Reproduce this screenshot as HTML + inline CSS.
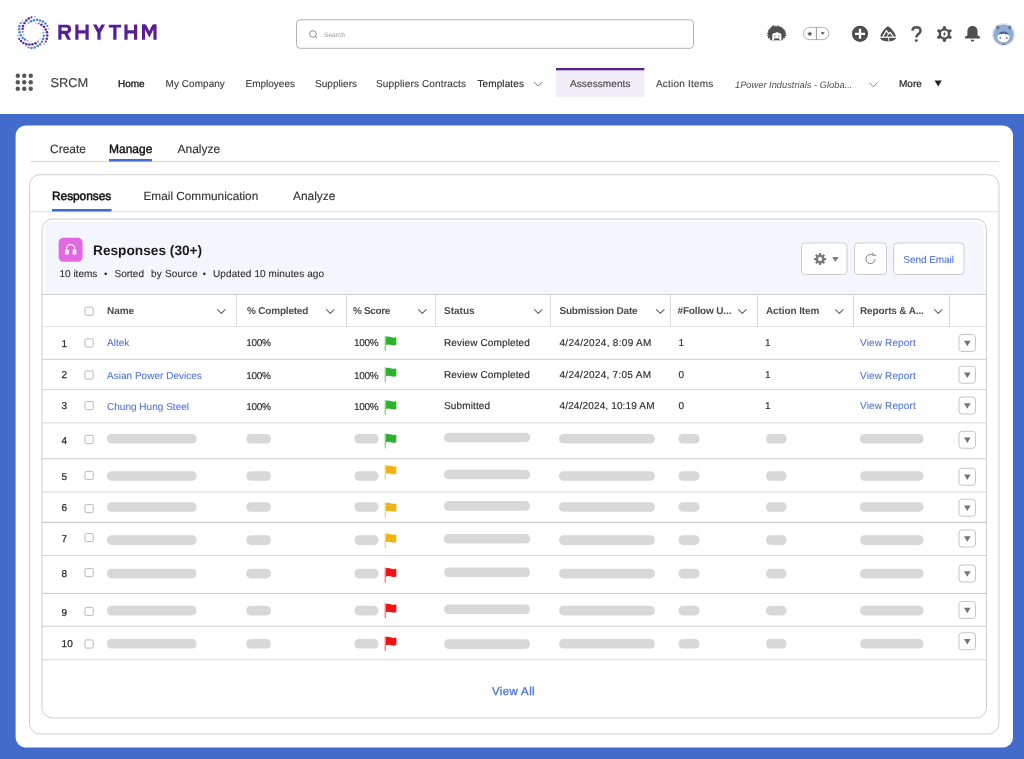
<!DOCTYPE html>
<html><head><meta charset="utf-8"><title>Rhythm SRCM</title>
<style>
html,body{margin:0;padding:0;background:#fff;}
body{width:1024px;height:759px;overflow:hidden;}
svg{display:block;will-change:transform;}
text{font-family:"Liberation Sans",sans-serif;text-rendering:geometricPrecision;white-space:pre;}
</style></head><body>
<svg width="1024" height="759" viewBox="0 0 1024 759">
<circle cx="34.65" cy="16.85" r="0.8" fill="#5a2292" fill-opacity="0.55"/>
<circle cx="31.49" cy="17.36" r="1.1" fill="#5a2292" fill-opacity="0.95"/>
<circle cx="28.77" cy="18.43" r="1.25" fill="#5a2292" fill-opacity="1"/>
<circle cx="26.31" cy="20.45" r="1.25" fill="#5a2292" fill-opacity="1"/>
<circle cx="24.41" cy="23.04" r="1.25" fill="#5a2292" fill-opacity="1"/>
<circle cx="23.08" cy="25.89" r="1.25" fill="#5a2292" fill-opacity="1"/>
<circle cx="22.64" cy="28.73" r="1.25" fill="#5a2292" fill-opacity="1"/>
<circle cx="22.83" cy="31.83" r="0.95" fill="#5a2292" fill-opacity="0.75"/>
<circle cx="23.78" cy="34.86" r="0.7" fill="#5a2292" fill-opacity="0.45"/>
<circle cx="22.33" cy="20.64" r="0.8" fill="#4b80d8" fill-opacity="0.55"/>
<circle cx="20.75" cy="23.17" r="1.1" fill="#4b80d8" fill-opacity="0.95"/>
<circle cx="19.48" cy="26.33" r="1.25" fill="#4b80d8" fill-opacity="1"/>
<circle cx="19.17" cy="29.37" r="1.25" fill="#4b80d8" fill-opacity="1"/>
<circle cx="19.61" cy="32.34" r="1.25" fill="#4b80d8" fill-opacity="1"/>
<circle cx="20.75" cy="35.31" r="1.25" fill="#4b80d8" fill-opacity="1"/>
<circle cx="22.64" cy="37.71" r="1.25" fill="#4b80d8" fill-opacity="1"/>
<circle cx="24.85" cy="39.61" r="1.25" fill="#4b80d8" fill-opacity="1"/>
<circle cx="27.57" cy="40.87" r="0.95" fill="#4b80d8" fill-opacity="0.75"/>
<circle cx="30.86" cy="41.50" r="0.7" fill="#4b80d8" fill-opacity="0.45"/>
<circle cx="17.90" cy="35.81" r="0.8" fill="#5a2292" fill-opacity="0.55"/>
<circle cx="19.17" cy="38.78" r="1.1" fill="#5a2292" fill-opacity="0.95"/>
<circle cx="21.06" cy="41.06" r="1.25" fill="#5a2292" fill-opacity="1"/>
<circle cx="23.46" cy="42.89" r="1.25" fill="#5a2292" fill-opacity="1"/>
<circle cx="26.31" cy="44.16" r="1.25" fill="#5a2292" fill-opacity="1"/>
<circle cx="29.41" cy="44.54" r="1.25" fill="#5a2292" fill-opacity="1"/>
<circle cx="32.44" cy="44.35" r="1.25" fill="#5a2292" fill-opacity="1"/>
<circle cx="35.47" cy="43.21" r="1.25" fill="#5a2292" fill-opacity="1"/>
<circle cx="38.00" cy="41.38" r="0.95" fill="#5a2292" fill-opacity="0.75"/>
<circle cx="40.03" cy="39.10" r="0.7" fill="#5a2292" fill-opacity="0.45"/>
<circle cx="25.49" cy="46.24" r="0.8" fill="#4b80d8" fill-opacity="0.55"/>
<circle cx="28.46" cy="47.51" r="1.1" fill="#4b80d8" fill-opacity="0.95"/>
<circle cx="31.49" cy="47.95" r="1.25" fill="#4b80d8" fill-opacity="1"/>
<circle cx="34.65" cy="47.51" r="1.25" fill="#4b80d8" fill-opacity="1"/>
<circle cx="37.62" cy="46.05" r="1.25" fill="#4b80d8" fill-opacity="1"/>
<circle cx="40.03" cy="44.16" r="1.25" fill="#4b80d8" fill-opacity="1"/>
<circle cx="41.92" cy="41.82" r="1.25" fill="#4b80d8" fill-opacity="1"/>
<circle cx="43.19" cy="38.97" r="1.25" fill="#4b80d8" fill-opacity="1"/>
<circle cx="43.82" cy="35.81" r="1.25" fill="#4b80d8" fill-opacity="1"/>
<circle cx="43.50" cy="32.65" r="0.95" fill="#4b80d8" fill-opacity="0.75"/>
<circle cx="42.55" cy="29.81" r="0.7" fill="#4b80d8" fill-opacity="0.45"/>
<circle cx="44.13" cy="44.03" r="0.8" fill="#5a2292" fill-opacity="0.55"/>
<circle cx="45.71" cy="41.50" r="1.1" fill="#5a2292" fill-opacity="0.95"/>
<circle cx="46.79" cy="38.66" r="1.25" fill="#5a2292" fill-opacity="1"/>
<circle cx="47.29" cy="35.50" r="1.25" fill="#5a2292" fill-opacity="1"/>
<circle cx="46.98" cy="32.34" r="1.25" fill="#5a2292" fill-opacity="1"/>
<circle cx="45.71" cy="29.49" r="1.25" fill="#5a2292" fill-opacity="1"/>
<circle cx="43.94" cy="26.84" r="1.25" fill="#5a2292" fill-opacity="1"/>
<circle cx="41.42" cy="24.75" r="1.25" fill="#5a2292" fill-opacity="1"/>
<circle cx="38.76" cy="23.49" r="0.95" fill="#5a2292" fill-opacity="0.75"/>
<circle cx="35.60" cy="22.98" r="0.7" fill="#5a2292" fill-opacity="0.45"/>
<circle cx="48.56" cy="28.86" r="0.8" fill="#4b80d8" fill-opacity="0.55"/>
<circle cx="47.29" cy="26.02" r="1.1" fill="#4b80d8" fill-opacity="0.95"/>
<circle cx="45.40" cy="23.49" r="1.25" fill="#4b80d8" fill-opacity="1"/>
<circle cx="42.87" cy="21.59" r="1.25" fill="#4b80d8" fill-opacity="1"/>
<circle cx="40.03" cy="20.45" r="1.25" fill="#4b80d8" fill-opacity="1"/>
<circle cx="36.99" cy="19.82" r="1.25" fill="#4b80d8" fill-opacity="1"/>
<circle cx="33.89" cy="20.20" r="1.25" fill="#4b80d8" fill-opacity="1"/>
<circle cx="31.05" cy="21.27" r="1.25" fill="#4b80d8" fill-opacity="1"/>
<circle cx="28.46" cy="22.98" r="0.95" fill="#4b80d8" fill-opacity="0.75"/>
<circle cx="26.56" cy="25.19" r="0.7" fill="#4b80d8" fill-opacity="0.45"/>
<clipPath id="wm"><rect x="56" y="24.4" width="104" height="15.45"/></clipPath>
<g clip-path="url(#wm)" fill="none" stroke="#581f91" stroke-width="3.2" stroke-linejoin="miter" stroke-miterlimit="6">
<path d="M59.9 41 V26 H66.45 A3.15 3.15 0 0 1 66.45 32.3 H59.9"/>
<path d="M65.1 32 L69.9 41.3"/>
<path d="M76.9 23 V41 M87.1 23 V41 M76.9 31.95 H87.1"/>
<path d="M93.6 22.4 L99 32.3 L104.4 22.4 M99 31.6 V41"/>
<path d="M108.8 26 H121.1 M114.9 26 V41"/>
<path d="M126 23 V41 M135.6 23 V41 M126 31.95 H135.6"/>
<path d="M143.5 41 V23 M155 41 V23"/>
<path d="M143.2 22.6 L149.25 34.2 L155.3 22.6" stroke-width="3.0"/>
</g>
<rect x="296.50" y="19.80" width="397.00" height="28.50" rx="3.5" fill="#fff" stroke="#b2b2b2" stroke-width="1"/>
<g transform="translate(308 29)"><circle cx="4.9" cy="5.0" r="3.3" fill="none" stroke="#8e8e8e" stroke-width="1.0"/><path d="M7.4 7.5 L8.9 9.0" stroke="#8e8e8e" stroke-width="1.0" stroke-linecap="round"/></g>
<g transform="translate(765 23)"><path d="M8.6 2.4 L9.4 4 L10.6 3 L11.6 4 L13.2 2.6 L14 4.2 C15.6 3.6 17.4 4.4 17.6 6 C19.4 6.2 20.4 8 19.6 9.4 L21 10 L19.8 11.2 L21.2 12.6 L19.2 13.2 L19.8 15 L17.8 14.8 L17.6 16.8 L16.4 16.9 L6.6 16.9 L5.4 16.8 L5.2 14.8 L3.2 15 L3.8 13.2 L2.4 12.6 L3.4 11.4 L2.4 10.2 L3.6 9.4 C2.8 7.8 3.8 6.2 5.4 6 C5.6 4.4 7.2 3.4 8.6 2.4 Z" fill="#4f4f4f" stroke="#4f4f4f" stroke-width="0.8" stroke-linejoin="round"/>
<path d="M7.2 16.9 L7.2 12.6 C7.2 10.4 8.6 9.6 10 10.2 C11 8.8 13.4 9 14.2 10.2 C15.6 9.8 16.4 10.8 16.4 12.6 L16.4 16.9 Z" fill="#fff"/>
<rect x="9.2" y="12.2" width="1.3" height="1.7" fill="#9a9a9a"/><rect x="13.4" y="12.2" width="1.3" height="1.7" fill="#9a9a9a"/>
<path d="M9 16.9 C9 15 10.6 14.9 11.8 15.4 C13 14.9 14.6 15 14.6 16.9 Z" fill="#4f4f4f"/></g>
<g transform="translate(800 24)"><rect x="3.4" y="3.4" width="25.4" height="12.2" rx="6.1" fill="#fff" stroke="#a8a8a8" stroke-width="0.9"/>
<path d="M16.4 3.2 L16.4 15.8" stroke="#8a8a8a" stroke-width="0.9"/>
<path d="M9.8 7.2 l0.75 1.6 1.75 0.2 -1.3 1.2 0.35 1.75 -1.55 -0.9 -1.55 0.9 0.35 -1.75 -1.3 -1.2 1.75 -0.2z" fill="#4f4f4f"/>
<path d="M20.7 8.2 h4 l-2 2.5z" fill="#4f4f4f"/></g>
<g transform="translate(850 24)"><circle cx="10" cy="9.8" r="8.1" fill="#4f4f4f"/><path d="M10 4.8 V14.8 M5 9.8 H15" stroke="#fff" stroke-width="2.3"/></g>
<g transform="translate(878 24)"><path d="M9.9 2.2 C12.6 3.4 17.2 8.6 18.2 13.2 C18.4 15.4 14.4 17.4 10 17.4 C5.6 17.4 1.8 15.4 2 13.2 C3 8.6 7.4 3.4 9.9 2.2 Z" fill="#4f4f4f"/>
<path d="M1.5 13.2 H18.8" stroke="#fff" stroke-width="1.3"/>
<path d="M4.6 13 L8.4 6.6 L10.5 9.6 L12.4 8.6 L15.4 13" stroke="#fff" stroke-width="1.25" fill="none" stroke-linejoin="miter"/>
<path d="M10.5 9.6 L9 12.6" stroke="#fff" stroke-width="0.9"/>
<path d="M10.5 13.4 L11 17.4" stroke="#fff" stroke-width="1.0"/></g>
<g transform="translate(908 24)"><path d="M4.4 6.6 C4.6 4.4 6.2 3.3 8.4 3.3 C10.8 3.3 12.5 4.7 12.5 6.8 C12.5 8.6 11.4 9.4 10.2 10.3 C9 11.2 8.4 11.9 8.4 13.6" fill="none" stroke="#4f4f4f" stroke-width="2.5" stroke-linecap="butt"/>
<circle cx="8.3" cy="16.6" r="1.45" fill="#4f4f4f"/></g>
<g transform="translate(934 24)"><circle cx="10.4" cy="10" r="5.7" fill="#4f4f4f"/><circle cx="10.40" cy="3.45" r="1.55" fill="#4f4f4f"/><path d="M10.40 10.00 L10.40 3.45" stroke="#4f4f4f" stroke-width="3.1"/><circle cx="16.07" cy="6.72" r="1.55" fill="#4f4f4f"/><path d="M10.40 10.00 L16.07 6.72" stroke="#4f4f4f" stroke-width="3.1"/><circle cx="16.07" cy="13.27" r="1.55" fill="#4f4f4f"/><path d="M10.40 10.00 L16.07 13.27" stroke="#4f4f4f" stroke-width="3.1"/><circle cx="10.40" cy="16.55" r="1.55" fill="#4f4f4f"/><path d="M10.40 10.00 L10.40 16.55" stroke="#4f4f4f" stroke-width="3.1"/><circle cx="4.73" cy="13.28" r="1.55" fill="#4f4f4f"/><path d="M10.40 10.00 L4.73 13.28" stroke="#4f4f4f" stroke-width="3.1"/><circle cx="4.73" cy="6.72" r="1.55" fill="#4f4f4f"/><path d="M10.40 10.00 L4.73 6.72" stroke="#4f4f4f" stroke-width="3.1"/><circle cx="10.4" cy="10" r="3.45" fill="#fff"/><path d="M11.5 7.0 L8.7 10.6 H10.2 L9.4 13.0 L12.2 9.4 H10.7 Z" fill="#4f4f4f"/></g>
<g transform="translate(962 24)"><path d="M10.5 1.9 C7.4 1.9 5.4 4 5.4 7.4 L5.4 11.4 L3.4 12.6 C2.6 13 2.7 14.4 3.6 14.4 L17.4 14.4 C18.3 14.4 18.4 13 17.6 12.6 L15.6 11.4 L15.6 7.4 C15.6 4 13.6 1.9 10.5 1.9 Z" fill="#4f4f4f"/><path d="M8.6 15.8 H12.4 C12.2 17.2 11.4 17.6 10.5 17.6 C9.6 17.6 8.8 17.2 8.6 15.8Z" fill="#4f4f4f"/></g>
<g transform="translate(991 22)"><circle cx="12.5" cy="12.3" r="11.6" fill="#e4e9f3"/>
<circle cx="12.5" cy="12.8" r="10.2" fill="#92aad1"/>
<ellipse cx="6.8" cy="5.6" rx="1.5" ry="2.1" fill="#5677ad"/><ellipse cx="18.7" cy="5.6" rx="1.5" ry="2.1" fill="#5677ad"/>
<ellipse cx="12.5" cy="15.0" rx="6.1" ry="5.3" fill="#fff"/>
<path d="M6.8 13.4 C7.2 10.6 9.6 9.4 12.5 9.4 C15.4 9.4 17.8 10.6 18.2 13.4 C17 12.2 15.6 12 14.4 12.4 C13.6 11.4 12.4 11.4 11.6 12.2 C10 11.8 8 12.2 6.8 13.4Z" fill="#44639a"/>
<ellipse cx="9.2" cy="15.9" rx="0.7" ry="1" fill="#3a5a90"/><ellipse cx="15.8" cy="15.9" rx="0.7" ry="1" fill="#3a5a90"/>
<path d="M10.2 22.4 H14.8" stroke="#5677ad" stroke-width="0.9"/></g>
<circle cx="17.80" cy="75.80" r="2.2" fill="#575757"/>
<circle cx="24.25" cy="75.80" r="2.2" fill="#575757"/>
<circle cx="30.70" cy="75.80" r="2.2" fill="#575757"/>
<circle cx="17.80" cy="82.30" r="2.2" fill="#575757"/>
<circle cx="24.25" cy="82.30" r="2.2" fill="#575757"/>
<circle cx="30.70" cy="82.30" r="2.2" fill="#575757"/>
<circle cx="17.80" cy="88.80" r="2.2" fill="#575757"/>
<circle cx="24.25" cy="88.80" r="2.2" fill="#575757"/>
<circle cx="30.70" cy="88.80" r="2.2" fill="#575757"/>
<path d="M534.45 82.30 L538.20 86.10 L541.95 82.30" fill="none" stroke="#6a6a6a" stroke-width="0.9" stroke-linecap="round" stroke-linejoin="round"/>
<rect x="556.00" y="68.00" width="88.30" height="29.00" fill="#f2edf8"/>
<rect x="556.00" y="68.00" width="88.30" height="2.30" fill="#57208f"/>
<path d="M869.50 82.80 L873.40 86.80 L877.30 82.80" fill="none" stroke="#777" stroke-width="0.9" stroke-linecap="round" stroke-linejoin="round"/>
<path d="M934.60 80.40 L941.80 80.40 L938.20 86.40 Z" fill="#222"/>
<rect x="0.00" y="114.00" width="1024.00" height="645.00" fill="#426bcb"/>
<rect x="15.60" y="125.60" width="997.40" height="621.90" rx="10" fill="#fff"/>
<rect x="30.00" y="160.80" width="969.00" height="1.40" fill="#dedede"/>
<rect x="109.00" y="159.00" width="43.00" height="2.50" fill="#426bcb"/>
<rect x="29.50" y="174.70" width="969.50" height="559.30" rx="10.5" fill="#fff" stroke="#cfcfcf" stroke-width="1"/>
<rect x="29.50" y="211.30" width="969.50" height="1.00" fill="#dedede"/>
<rect x="52.00" y="209.00" width="59.50" height="2.50" fill="#426bcb"/>
<clipPath id="cc"><rect x="42" y="219" width="944.5" height="499" rx="10.5"/></clipPath>
<rect x="42.00" y="219.00" width="944.50" height="499.00" rx="10.5" fill="#fff"/>
<rect x="42" y="219" width="944.5" height="75.5" fill="#f4f6fd" clip-path="url(#cc)"/>
<rect x="43.6" y="220.6" width="941.3" height="495.8" rx="9" fill="none" stroke="#fff" stroke-width="2.6" stroke-opacity="0.75"/>
<rect x="58.60" y="237.80" width="24.00" height="24.00" rx="4.8" fill="#e16ae1"/>
<path d="M66.6 251 V248.6 A4.1 4.1 0 0 1 74.8 248.6 V251" fill="none" stroke="#fff" stroke-width="1.05" stroke-opacity="0.95"/>
<rect x="65.00" y="249.80" width="3.80" height="4.60" rx="0.9" fill="#fff"/>
<rect x="72.60" y="249.80" width="3.80" height="4.60" rx="0.9" fill="#fff"/>
<path d="M66.9 250.2 V254 M74.5 250.2 V254" stroke="#f0b0f0" stroke-width="0.5"/>
<circle cx="105.7" cy="273.8" r="1.35" fill="#333"/>
<circle cx="204.3" cy="273.8" r="1.35" fill="#333"/>
<rect x="801.50" y="243.00" width="45.50" height="31.50" rx="3.5" fill="#fff" stroke="#cdcdcd" stroke-width="1"/>
<rect x="854.50" y="243.00" width="32.00" height="31.50" rx="3.5" fill="#fff" stroke="#cdcdcd" stroke-width="1"/>
<rect x="893.50" y="243.00" width="70.50" height="31.50" rx="3.5" fill="#fff" stroke="#cdcdcd" stroke-width="1"/>
<g transform="translate(813.6 252.6)"><path d="M12.51 5.45 L12.51 7.55 L10.88 7.55 L10.34 8.85 L11.49 10.01 L10.01 11.49 L8.85 10.34 L7.55 10.88 L7.55 12.51 L5.45 12.51 L5.45 10.88 L4.15 10.34 L2.99 11.49 L1.51 10.01 L2.66 8.85 L2.12 7.55 L0.49 7.55 L0.49 5.45 L2.12 5.45 L2.66 4.15 L1.51 2.99 L2.99 1.51 L4.15 2.66 L5.45 2.12 L5.45 0.49 L7.55 0.49 L7.55 2.12 L8.85 2.66 L10.01 1.51 L11.49 2.99 L10.34 4.15 L10.88 5.45Z" fill="#7a7a7a"/><circle cx="6.5" cy="6.5" r="2.1" fill="#fff"/></g>
<path d="M832.25 257.10 L838.55 257.10 L835.40 262.10 Z" fill="#7a7a7a"/>
<g transform="translate(863.5 252)"><path d="M11.6 7 A4.6 4.6 0 1 1 9.6 3.2" fill="none" stroke="#808080" stroke-width="1"/><path d="M9.2 1 L9.9 3.6 L12.4 3" fill="none" stroke="#808080" stroke-width="1" stroke-linejoin="round" stroke-linecap="round"/></g>
<rect x="42.00" y="294.00" width="944.50" height="1.00" fill="#cfcfcf"/>
<rect x="85.00" y="307.10" width="8.20" height="8.20" rx="1.3" fill="#fff" stroke="#b9b9b9" stroke-width="1"/>
<path d="M217.50 309.55 L221.30 313.45 L225.10 309.55" fill="none" stroke="#646464" stroke-width="1.1" stroke-linecap="round" stroke-linejoin="round"/>
<path d="M326.50 309.55 L330.30 313.45 L334.10 309.55" fill="none" stroke="#646464" stroke-width="1.1" stroke-linecap="round" stroke-linejoin="round"/>
<path d="M418.50 309.55 L422.30 313.45 L426.10 309.55" fill="none" stroke="#646464" stroke-width="1.1" stroke-linecap="round" stroke-linejoin="round"/>
<path d="M534.50 309.55 L538.30 313.45 L542.10 309.55" fill="none" stroke="#646464" stroke-width="1.1" stroke-linecap="round" stroke-linejoin="round"/>
<path d="M656.50 309.55 L660.30 313.45 L664.10 309.55" fill="none" stroke="#646464" stroke-width="1.1" stroke-linecap="round" stroke-linejoin="round"/>
<path d="M738.50 309.55 L742.30 313.45 L746.10 309.55" fill="none" stroke="#646464" stroke-width="1.1" stroke-linecap="round" stroke-linejoin="round"/>
<path d="M835.50 309.55 L839.30 313.45 L843.10 309.55" fill="none" stroke="#646464" stroke-width="1.1" stroke-linecap="round" stroke-linejoin="round"/>
<path d="M934.50 309.55 L938.30 313.45 L942.10 309.55" fill="none" stroke="#646464" stroke-width="1.1" stroke-linecap="round" stroke-linejoin="round"/>
<rect x="236.00" y="295.00" width="1.00" height="32.00" fill="#dadada"/>
<rect x="346.00" y="295.00" width="1.00" height="32.00" fill="#dadada"/>
<rect x="435.00" y="295.00" width="1.00" height="32.00" fill="#dadada"/>
<rect x="550.00" y="295.00" width="1.00" height="32.00" fill="#dadada"/>
<rect x="670.00" y="295.00" width="1.00" height="32.00" fill="#dadada"/>
<rect x="757.00" y="295.00" width="1.00" height="32.00" fill="#dadada"/>
<rect x="853.00" y="295.00" width="1.00" height="32.00" fill="#dadada"/>
<rect x="949.00" y="295.00" width="1.00" height="32.00" fill="#dadada"/>
<rect x="42.00" y="326.10" width="944.50" height="1.00" fill="#e4e4e4"/>
<rect x="42.00" y="358.80" width="944.50" height="1.00" fill="#cacaca"/>
<rect x="42.00" y="389.10" width="944.50" height="1.00" fill="#d6d6d6"/>
<rect x="42.00" y="422.40" width="944.50" height="1.00" fill="#d6d6d6"/>
<rect x="42.00" y="458.20" width="944.50" height="1.00" fill="#d0d0d0"/>
<rect x="42.00" y="491.50" width="944.50" height="1.00" fill="#dadada"/>
<rect x="42.00" y="521.80" width="944.50" height="1.00" fill="#bebebe"/>
<rect x="42.00" y="555.00" width="944.50" height="1.00" fill="#d6d6d6"/>
<rect x="42.00" y="592.90" width="944.50" height="1.00" fill="#c6c6c6"/>
<rect x="42.00" y="625.70" width="944.50" height="1.00" fill="#cacaca"/>
<rect x="42.00" y="659.30" width="944.50" height="1.00" fill="#d6d6d6"/>
<rect x="85.00" y="338.80" width="8.20" height="8.20" rx="1.3" fill="#fff" stroke="#b9b9b9" stroke-width="1"/>
<g transform="translate(384.7 335.9)"><rect x="0" y="0" width="1.0" height="15" fill="#2fb02f" fill-opacity="0.75"/><path d="M1.3 0.9 C3 0.4 4.9 0.6 6.6 1.3 C8.3 2.0 9.9 1.9 11.6 1.1 L11.6 8.9 C9.9 9.7 8.3 9.8 6.6 9.1 C4.9 8.4 3 8.3 1.3 9.1 Z" fill="#2fb02f"/></g>
<rect x="959.00" y="334.50" width="16.50" height="17.00" rx="3.0" fill="#fff" stroke="#c6c6c6" stroke-width="1"/>
<path d="M964.00 340.65 L970.60 340.65 L967.30 346.35 Z" fill="#747474"/>
<rect x="85.00" y="370.90" width="8.20" height="8.20" rx="1.3" fill="#fff" stroke="#b9b9b9" stroke-width="1"/>
<g transform="translate(384.7 367.1)"><rect x="0" y="0" width="1.0" height="15" fill="#2fb02f" fill-opacity="0.75"/><path d="M1.3 0.9 C3 0.4 4.9 0.6 6.6 1.3 C8.3 2.0 9.9 1.9 11.6 1.1 L11.6 8.9 C9.9 9.7 8.3 9.8 6.6 9.1 C4.9 8.4 3 8.3 1.3 9.1 Z" fill="#2fb02f"/></g>
<rect x="959.00" y="366.25" width="16.50" height="17.00" rx="3.0" fill="#fff" stroke="#c6c6c6" stroke-width="1"/>
<path d="M964.00 372.40 L970.60 372.40 L967.30 378.10 Z" fill="#747474"/>
<rect x="85.00" y="401.50" width="8.20" height="8.20" rx="1.3" fill="#fff" stroke="#b9b9b9" stroke-width="1"/>
<g transform="translate(384.7 400)"><rect x="0" y="0" width="1.0" height="15" fill="#2fb02f" fill-opacity="0.75"/><path d="M1.3 0.9 C3 0.4 4.9 0.6 6.6 1.3 C8.3 2.0 9.9 1.9 11.6 1.1 L11.6 8.9 C9.9 9.7 8.3 9.8 6.6 9.1 C4.9 8.4 3 8.3 1.3 9.1 Z" fill="#2fb02f"/></g>
<rect x="959.00" y="397.00" width="16.50" height="17.00" rx="3.0" fill="#fff" stroke="#c6c6c6" stroke-width="1"/>
<path d="M964.00 403.15 L970.60 403.15 L967.30 408.85 Z" fill="#747474"/>
<rect x="85.00" y="435.40" width="8.20" height="8.20" rx="1.3" fill="#fff" stroke="#b9b9b9" stroke-width="1"/>
<rect x="107.00" y="434.00" width="89.50" height="9.60" rx="4.4" fill="#d8d8d8"/>
<rect x="246.30" y="434.00" width="24.60" height="9.60" rx="4.4" fill="#d8d8d8"/>
<rect x="354.50" y="434.00" width="24.00" height="9.60" rx="4.4" fill="#d8d8d8"/>
<rect x="444.00" y="432.70" width="86.00" height="9.60" rx="4.4" fill="#d8d8d8"/>
<rect x="559.10" y="434.00" width="95.70" height="9.60" rx="4.4" fill="#d8d8d8"/>
<rect x="678.50" y="434.00" width="21.00" height="9.60" rx="4.4" fill="#d8d8d8"/>
<rect x="766.00" y="434.00" width="20.50" height="9.60" rx="4.4" fill="#d8d8d8"/>
<rect x="860.00" y="434.00" width="63.50" height="9.60" rx="4.4" fill="#d8d8d8"/>
<g transform="translate(384.7 433.3)"><rect x="0" y="0" width="1.0" height="15" fill="#2fb02f" fill-opacity="0.75"/><path d="M1.3 0.9 C3 0.4 4.9 0.6 6.6 1.3 C8.3 2.0 9.9 1.9 11.6 1.1 L11.6 8.9 C9.9 9.7 8.3 9.8 6.6 9.1 C4.9 8.4 3 8.3 1.3 9.1 Z" fill="#2fb02f"/></g>
<rect x="959.00" y="431.25" width="16.50" height="17.00" rx="3.0" fill="#fff" stroke="#c6c6c6" stroke-width="1"/>
<path d="M964.00 437.40 L970.60 437.40 L967.30 443.10 Z" fill="#747474"/>
<rect x="85.00" y="471.40" width="8.20" height="8.20" rx="1.3" fill="#fff" stroke="#b9b9b9" stroke-width="1"/>
<rect x="107.00" y="471.20" width="89.50" height="9.60" rx="4.4" fill="#d8d8d8"/>
<rect x="246.30" y="471.20" width="24.60" height="9.60" rx="4.4" fill="#d8d8d8"/>
<rect x="354.50" y="471.20" width="24.00" height="9.60" rx="4.4" fill="#d8d8d8"/>
<rect x="444.00" y="469.70" width="86.00" height="9.60" rx="4.4" fill="#d8d8d8"/>
<rect x="559.10" y="471.20" width="95.70" height="9.60" rx="4.4" fill="#d8d8d8"/>
<rect x="678.50" y="471.20" width="21.00" height="9.60" rx="4.4" fill="#d8d8d8"/>
<rect x="766.00" y="471.20" width="20.50" height="9.60" rx="4.4" fill="#d8d8d8"/>
<rect x="860.00" y="471.20" width="63.50" height="9.60" rx="4.4" fill="#d8d8d8"/>
<g transform="translate(384.7 464.8)"><rect x="0" y="0" width="1.0" height="15" fill="#f0b418" fill-opacity="0.75"/><path d="M1.3 0.9 C3 0.4 4.9 0.6 6.6 1.3 C8.3 2.0 9.9 1.9 11.6 1.1 L11.6 8.9 C9.9 9.7 8.3 9.8 6.6 9.1 C4.9 8.4 3 8.3 1.3 9.1 Z" fill="#f0b418"/></g>
<rect x="959.00" y="468.25" width="16.50" height="17.00" rx="3.0" fill="#fff" stroke="#c6c6c6" stroke-width="1"/>
<path d="M964.00 474.40 L970.60 474.40 L967.30 480.10 Z" fill="#747474"/>
<rect x="85.00" y="504.40" width="8.20" height="8.20" rx="1.3" fill="#fff" stroke="#b9b9b9" stroke-width="1"/>
<rect x="107.00" y="502.20" width="89.50" height="9.60" rx="4.4" fill="#d8d8d8"/>
<rect x="246.30" y="502.20" width="24.60" height="9.60" rx="4.4" fill="#d8d8d8"/>
<rect x="354.50" y="502.20" width="24.00" height="9.60" rx="4.4" fill="#d8d8d8"/>
<rect x="444.00" y="501.10" width="86.00" height="9.60" rx="4.4" fill="#d8d8d8"/>
<rect x="559.10" y="502.20" width="95.70" height="9.60" rx="4.4" fill="#d8d8d8"/>
<rect x="678.50" y="502.20" width="21.00" height="9.60" rx="4.4" fill="#d8d8d8"/>
<rect x="766.00" y="502.20" width="20.50" height="9.60" rx="4.4" fill="#d8d8d8"/>
<rect x="860.00" y="502.20" width="63.50" height="9.60" rx="4.4" fill="#d8d8d8"/>
<g transform="translate(384.7 502.1)"><rect x="0" y="0" width="1.0" height="15" fill="#f0b418" fill-opacity="0.75"/><path d="M1.3 0.9 C3 0.4 4.9 0.6 6.6 1.3 C8.3 2.0 9.9 1.9 11.6 1.1 L11.6 8.9 C9.9 9.7 8.3 9.8 6.6 9.1 C4.9 8.4 3 8.3 1.3 9.1 Z" fill="#f0b418"/></g>
<rect x="959.00" y="499.25" width="16.50" height="17.00" rx="3.0" fill="#fff" stroke="#c6c6c6" stroke-width="1"/>
<path d="M964.00 505.40 L970.60 505.40 L967.30 511.10 Z" fill="#747474"/>
<rect x="85.00" y="533.40" width="8.20" height="8.20" rx="1.3" fill="#fff" stroke="#b9b9b9" stroke-width="1"/>
<rect x="107.00" y="535.30" width="89.50" height="9.60" rx="4.4" fill="#d8d8d8"/>
<rect x="246.30" y="535.30" width="24.60" height="9.60" rx="4.4" fill="#d8d8d8"/>
<rect x="354.50" y="535.30" width="24.00" height="9.60" rx="4.4" fill="#d8d8d8"/>
<rect x="444.00" y="533.95" width="86.00" height="9.60" rx="4.4" fill="#d8d8d8"/>
<rect x="559.10" y="535.30" width="95.70" height="9.60" rx="4.4" fill="#d8d8d8"/>
<rect x="678.50" y="535.30" width="21.00" height="9.60" rx="4.4" fill="#d8d8d8"/>
<rect x="766.00" y="535.30" width="20.50" height="9.60" rx="4.4" fill="#d8d8d8"/>
<rect x="860.00" y="535.30" width="63.50" height="9.60" rx="4.4" fill="#d8d8d8"/>
<g transform="translate(384.7 533.1)"><rect x="0" y="0" width="1.0" height="15" fill="#f0b418" fill-opacity="0.75"/><path d="M1.3 0.9 C3 0.4 4.9 0.6 6.6 1.3 C8.3 2.0 9.9 1.9 11.6 1.1 L11.6 8.9 C9.9 9.7 8.3 9.8 6.6 9.1 C4.9 8.4 3 8.3 1.3 9.1 Z" fill="#f0b418"/></g>
<rect x="959.00" y="530.00" width="16.50" height="17.00" rx="3.0" fill="#fff" stroke="#c6c6c6" stroke-width="1"/>
<path d="M964.00 536.15 L970.60 536.15 L967.30 541.85 Z" fill="#747474"/>
<rect x="85.00" y="568.40" width="8.20" height="8.20" rx="1.3" fill="#fff" stroke="#b9b9b9" stroke-width="1"/>
<rect x="107.00" y="568.80" width="89.50" height="9.60" rx="4.4" fill="#d8d8d8"/>
<rect x="246.30" y="568.80" width="24.60" height="9.60" rx="4.4" fill="#d8d8d8"/>
<rect x="354.50" y="568.80" width="24.00" height="9.60" rx="4.4" fill="#d8d8d8"/>
<rect x="444.00" y="567.45" width="86.00" height="9.60" rx="4.4" fill="#d8d8d8"/>
<rect x="559.10" y="568.80" width="95.70" height="9.60" rx="4.4" fill="#d8d8d8"/>
<rect x="678.50" y="568.80" width="21.00" height="9.60" rx="4.4" fill="#d8d8d8"/>
<rect x="766.00" y="568.80" width="20.50" height="9.60" rx="4.4" fill="#d8d8d8"/>
<rect x="860.00" y="568.80" width="63.50" height="9.60" rx="4.4" fill="#d8d8d8"/>
<g transform="translate(384.7 567.5)"><rect x="0" y="0" width="1.0" height="15" fill="#f41212" fill-opacity="0.75"/><path d="M1.3 0.9 C3 0.4 4.9 0.6 6.6 1.3 C8.3 2.0 9.9 1.9 11.6 1.1 L11.6 8.9 C9.9 9.7 8.3 9.8 6.6 9.1 C4.9 8.4 3 8.3 1.3 9.1 Z" fill="#f41212"/></g>
<rect x="959.00" y="565.00" width="16.50" height="17.00" rx="3.0" fill="#fff" stroke="#c6c6c6" stroke-width="1"/>
<path d="M964.00 571.15 L970.60 571.15 L967.30 576.85 Z" fill="#747474"/>
<rect x="85.00" y="607.40" width="8.20" height="8.20" rx="1.3" fill="#fff" stroke="#b9b9b9" stroke-width="1"/>
<rect x="107.00" y="605.80" width="89.50" height="9.60" rx="4.4" fill="#d8d8d8"/>
<rect x="246.30" y="605.80" width="24.60" height="9.60" rx="4.4" fill="#d8d8d8"/>
<rect x="354.50" y="605.80" width="24.00" height="9.60" rx="4.4" fill="#d8d8d8"/>
<rect x="444.00" y="604.45" width="86.00" height="9.60" rx="4.4" fill="#d8d8d8"/>
<rect x="559.10" y="605.80" width="95.70" height="9.60" rx="4.4" fill="#d8d8d8"/>
<rect x="678.50" y="605.80" width="21.00" height="9.60" rx="4.4" fill="#d8d8d8"/>
<rect x="766.00" y="605.80" width="20.50" height="9.60" rx="4.4" fill="#d8d8d8"/>
<rect x="860.00" y="605.80" width="63.50" height="9.60" rx="4.4" fill="#d8d8d8"/>
<g transform="translate(384.7 603.1)"><rect x="0" y="0" width="1.0" height="15" fill="#f41212" fill-opacity="0.75"/><path d="M1.3 0.9 C3 0.4 4.9 0.6 6.6 1.3 C8.3 2.0 9.9 1.9 11.6 1.1 L11.6 8.9 C9.9 9.7 8.3 9.8 6.6 9.1 C4.9 8.4 3 8.3 1.3 9.1 Z" fill="#f41212"/></g>
<rect x="959.00" y="601.50" width="16.50" height="17.00" rx="3.0" fill="#fff" stroke="#c6c6c6" stroke-width="1"/>
<path d="M964.00 607.65 L970.60 607.65 L967.30 613.35 Z" fill="#747474"/>
<rect x="85.00" y="639.90" width="8.20" height="8.20" rx="1.3" fill="#fff" stroke="#b9b9b9" stroke-width="1"/>
<rect x="107.00" y="638.90" width="89.50" height="9.60" rx="4.4" fill="#d8d8d8"/>
<rect x="246.30" y="638.90" width="24.60" height="9.60" rx="4.4" fill="#d8d8d8"/>
<rect x="354.50" y="638.90" width="24.00" height="9.60" rx="4.4" fill="#d8d8d8"/>
<rect x="444.00" y="639.30" width="86.00" height="9.60" rx="4.4" fill="#d8d8d8"/>
<rect x="559.10" y="638.90" width="95.70" height="9.60" rx="4.4" fill="#d8d8d8"/>
<rect x="678.50" y="638.90" width="21.00" height="9.60" rx="4.4" fill="#d8d8d8"/>
<rect x="766.00" y="638.90" width="20.50" height="9.60" rx="4.4" fill="#d8d8d8"/>
<rect x="860.00" y="638.90" width="63.50" height="9.60" rx="4.4" fill="#d8d8d8"/>
<g transform="translate(384.7 636.2)"><rect x="0" y="0" width="1.0" height="15" fill="#f41212" fill-opacity="0.75"/><path d="M1.3 0.9 C3 0.4 4.9 0.6 6.6 1.3 C8.3 2.0 9.9 1.9 11.6 1.1 L11.6 8.9 C9.9 9.7 8.3 9.8 6.6 9.1 C4.9 8.4 3 8.3 1.3 9.1 Z" fill="#f41212"/></g>
<rect x="959.00" y="632.75" width="16.50" height="17.00" rx="3.0" fill="#fff" stroke="#c6c6c6" stroke-width="1"/>
<path d="M964.00 638.90 L970.60 638.90 L967.30 644.60 Z" fill="#747474"/>
<rect x="42.00" y="219.00" width="944.50" height="499.00" rx="10.5" fill="none" stroke="#cfcfcf" stroke-width="1"/>
<text x="324.00" y="36.76" font-size="6.6" fill="#979797">Search</text>
<text x="50.50" y="86.68" font-size="12.8" fill="#444" stroke="#444" stroke-width="0.2">SRCM</text>
<text x="118.00" y="87.08" font-size="10" fill="#151515" stroke="#151515" stroke-width="0.3">Home</text>
<text x="165.50" y="87.08" font-size="10" fill="#3d3d3d" letter-spacing="0.05" stroke="#3d3d3d" stroke-width="0.14">My Company</text>
<text x="245.50" y="87.08" font-size="10" fill="#3d3d3d" stroke="#3d3d3d" stroke-width="0.14">Employees</text>
<text x="315.00" y="87.08" font-size="10" fill="#3d3d3d" letter-spacing="0.05" stroke="#3d3d3d" stroke-width="0.14">Suppliers</text>
<text x="376.00" y="87.08" font-size="10" fill="#3d3d3d" letter-spacing="0.15" stroke="#3d3d3d" stroke-width="0.14">Suppliers Contracts</text>
<text x="477.50" y="87.08" font-size="10" fill="#2a2a2a" letter-spacing="0.1" stroke="#2a2a2a" stroke-width="0.15">Templates</text>
<text x="570.00" y="87.08" font-size="10" fill="#444" letter-spacing="0.1" stroke="#444" stroke-width="0.14">Assessments</text>
<text x="656.00" y="87.08" font-size="10" fill="#444" letter-spacing="0.2" stroke="#444" stroke-width="0.14">Action Items</text>
<text x="735.00" y="88.03" font-size="9.3" fill="#505050" font-style="italic">1Power Industrials - Globa...</text>
<text x="899.00" y="87.08" font-size="10" fill="#222" stroke="#222" stroke-width="0.2">More</text>
<text x="50.00" y="153.30" font-size="12" fill="#333" stroke="#333" stroke-width="0.14">Create</text>
<text x="109.00" y="153.30" font-size="12" fill="#111" stroke="#111" stroke-width="0.4">Manage</text>
<text x="177.50" y="153.30" font-size="12" fill="#333" stroke="#333" stroke-width="0.14">Analyze</text>
<text x="52.00" y="200.30" font-size="12" fill="#111" letter-spacing="-0.1" stroke="#111" stroke-width="0.5">Responses</text>
<text x="143.50" y="200.22" font-size="11.8" fill="#333" stroke="#333" stroke-width="0.14">Email Communication</text>
<text x="293.00" y="200.26" font-size="11.9" fill="#333" stroke="#333" stroke-width="0.14">Analyze</text>
<text x="93.00" y="254.90" font-size="13.7" fill="#1a1a1a" font-weight="700">Responses (30+)</text>
<text x="59.50" y="277.08" font-size="10" fill="#333" stroke="#333" stroke-width="0.14">10 items</text>
<text x="114.50" y="277.08" font-size="10" fill="#333" stroke="#333" stroke-width="0.14">Sorted</text>
<text x="151.00" y="277.08" font-size="10" fill="#333" letter-spacing="0.2" stroke="#333" stroke-width="0.14">by Source</text>
<text x="213.00" y="277.08" font-size="10" fill="#333" letter-spacing="0.1" stroke="#333" stroke-width="0.14">Updated 10 minutes ago</text>
<text x="903.30" y="263.08" font-size="10" fill="#4a72d0" letter-spacing="-0.05" stroke="#4a72d0" stroke-width="0.06">Send Email</text>
<text x="107.00" y="314.38" font-size="10" fill="#4c4c4c" font-weight="700" letter-spacing="-0.05">Name</text>
<text x="247.00" y="314.38" font-size="10" fill="#4c4c4c" font-weight="700" letter-spacing="-0.2">% Completed</text>
<text x="353.00" y="314.38" font-size="10" fill="#4c4c4c" font-weight="700" letter-spacing="-0.35">% Score</text>
<text x="444.00" y="314.38" font-size="10" fill="#4c4c4c" font-weight="700">Status</text>
<text x="559.50" y="314.38" font-size="10" fill="#4c4c4c" font-weight="700" letter-spacing="-0.22">Submission Date</text>
<text x="677.50" y="314.38" font-size="10" fill="#4c4c4c" font-weight="700" letter-spacing="-0.15">#Follow U...</text>
<text x="766.00" y="314.38" font-size="10" fill="#4c4c4c" font-weight="700" letter-spacing="-0.1">Action Item</text>
<text x="860.00" y="313.58" font-size="10" fill="#4c4c4c" font-weight="700" letter-spacing="-0.15">Reports &amp; A...</text>
<text x="61.50" y="347.08" font-size="10" fill="#2a2a2a" stroke="#2a2a2a" stroke-width="0.25">1</text>
<text x="107.00" y="345.68" font-size="10" fill="#4a72d0" letter-spacing="0.02" stroke="#4a72d0" stroke-width="0.06">Altek</text>
<text x="246.30" y="345.68" font-size="10" fill="#2a2a2a" letter-spacing="-0.33" stroke="#2a2a2a" stroke-width="0.14">100%</text>
<text x="354.10" y="345.68" font-size="10" fill="#2a2a2a" letter-spacing="-0.33" stroke="#2a2a2a" stroke-width="0.14">100%</text>
<text x="444.00" y="346.08" font-size="10" fill="#2a2a2a" letter-spacing="0.13" stroke="#2a2a2a" stroke-width="0.14">Review Completed</text>
<text x="559.50" y="346.08" font-size="10" fill="#2a2a2a" letter-spacing="0.3" stroke="#2a2a2a" stroke-width="0.14">4/24/2024, 8:09 AM</text>
<text x="678.50" y="346.08" font-size="10" fill="#2a2a2a" stroke="#2a2a2a" stroke-width="0.14">1</text>
<text x="765.00" y="346.08" font-size="10" fill="#2a2a2a" stroke="#2a2a2a" stroke-width="0.14">1</text>
<text x="860.00" y="346.28" font-size="10" fill="#4a72d0" letter-spacing="0.15" stroke="#4a72d0" stroke-width="0.06">View Report</text>
<text x="61.50" y="378.38" font-size="10" fill="#2a2a2a" stroke="#2a2a2a" stroke-width="0.25">2</text>
<text x="107.00" y="379.38" font-size="10" fill="#4a72d0" letter-spacing="0.02" stroke="#4a72d0" stroke-width="0.06">Asian Power Devices</text>
<text x="246.30" y="379.38" font-size="10" fill="#2a2a2a" letter-spacing="-0.33" stroke="#2a2a2a" stroke-width="0.14">100%</text>
<text x="354.10" y="379.38" font-size="10" fill="#2a2a2a" letter-spacing="-0.33" stroke="#2a2a2a" stroke-width="0.14">100%</text>
<text x="444.00" y="378.38" font-size="10" fill="#2a2a2a" letter-spacing="0.13" stroke="#2a2a2a" stroke-width="0.14">Review Completed</text>
<text x="559.50" y="378.38" font-size="10" fill="#2a2a2a" letter-spacing="0.28" stroke="#2a2a2a" stroke-width="0.14">4/24/2024, 7:05 AM</text>
<text x="678.50" y="378.38" font-size="10" fill="#2a2a2a" stroke="#2a2a2a" stroke-width="0.14">0</text>
<text x="765.00" y="378.38" font-size="10" fill="#2a2a2a" stroke="#2a2a2a" stroke-width="0.14">1</text>
<text x="860.00" y="379.38" font-size="10" fill="#4a72d0" letter-spacing="0.15" stroke="#4a72d0" stroke-width="0.06">View Report</text>
<text x="61.50" y="409.08" font-size="10" fill="#2a2a2a" stroke="#2a2a2a" stroke-width="0.25">3</text>
<text x="107.00" y="410.18" font-size="10" fill="#4a72d0" letter-spacing="0.02" stroke="#4a72d0" stroke-width="0.06">Chung Hung Steel</text>
<text x="246.30" y="410.18" font-size="10" fill="#2a2a2a" letter-spacing="-0.33" stroke="#2a2a2a" stroke-width="0.14">100%</text>
<text x="354.10" y="410.18" font-size="10" fill="#2a2a2a" letter-spacing="-0.33" stroke="#2a2a2a" stroke-width="0.14">100%</text>
<text x="444.00" y="409.28" font-size="10" fill="#2a2a2a" letter-spacing="0.13" stroke="#2a2a2a" stroke-width="0.14">Submitted</text>
<text x="559.50" y="409.28" font-size="10" fill="#2a2a2a" letter-spacing="0.15" stroke="#2a2a2a" stroke-width="0.14">4/24/2024, 10:19 AM</text>
<text x="678.50" y="409.28" font-size="10" fill="#2a2a2a" stroke="#2a2a2a" stroke-width="0.14">0</text>
<text x="765.00" y="409.28" font-size="10" fill="#2a2a2a" stroke="#2a2a2a" stroke-width="0.14">1</text>
<text x="860.00" y="409.18" font-size="10" fill="#4a72d0" letter-spacing="0.15" stroke="#4a72d0" stroke-width="0.06">View Report</text>
<text x="61.50" y="443.58" font-size="10" fill="#2a2a2a" stroke="#2a2a2a" stroke-width="0.25">4</text>
<text x="61.50" y="480.08" font-size="10" fill="#2a2a2a" stroke="#2a2a2a" stroke-width="0.25">5</text>
<text x="61.50" y="511.08" font-size="10" fill="#2a2a2a" stroke="#2a2a2a" stroke-width="0.25">6</text>
<text x="61.50" y="542.08" font-size="10" fill="#2a2a2a" stroke="#2a2a2a" stroke-width="0.25">7</text>
<text x="61.50" y="577.08" font-size="10" fill="#2a2a2a" stroke="#2a2a2a" stroke-width="0.25">8</text>
<text x="61.50" y="616.08" font-size="10" fill="#2a2a2a" stroke="#2a2a2a" stroke-width="0.25">9</text>
<text x="61.60" y="646.78" font-size="10" fill="#2a2a2a" stroke="#2a2a2a" stroke-width="0.25">10</text>
<text x="492.00" y="695.08" font-size="11.4" fill="#4a72d0" letter-spacing="0.42" stroke="#4a72d0" stroke-width="0.32">View All</text>
</svg>
</body></html>
